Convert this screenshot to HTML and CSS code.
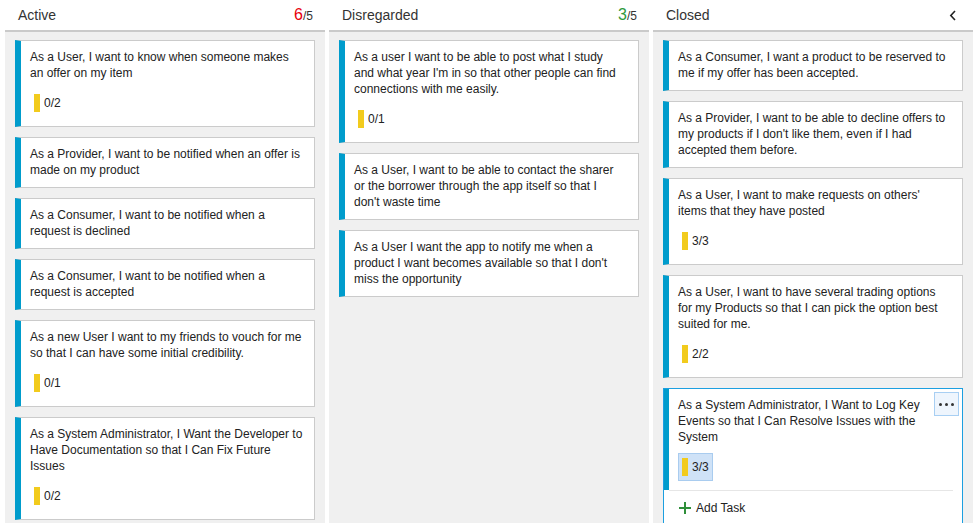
FILE: index.html
```html
<!DOCTYPE html>
<html lang="en">
<head>
<meta charset="utf-8">
<title>Board</title>
<link rel="stylesheet" href="styles.css">
</head>
<body>
<div class="board">
  <section class="column">
    <header class="col-head">
      <span class="col-title">Active</span>
      <span class="count"><span class="num over">6</span>/5</span>
    </header>
    <div class="col-body">
      <div class="card"><div class="card-body">
        <div class="title">As a User, I want to know when someone makes an offer on my item</div>
        <div class="tasks"><span class="progress"><span class="bar"></span>0/2</span></div>
      </div></div>
      <div class="card"><div class="card-body">
        <div class="title">As a Provider, I want to be notified when an offer is made on my product</div>
      </div></div>
      <div class="card"><div class="card-body">
        <div class="title">As a Consumer, I want to be notified when a request is declined</div>
      </div></div>
      <div class="card"><div class="card-body">
        <div class="title">As a Consumer, I want to be notified when a request is accepted</div>
      </div></div>
      <div class="card"><div class="card-body">
        <div class="title">As a new User I want to my friends to vouch for me so that I can have some initial credibility.</div>
        <div class="tasks"><span class="progress"><span class="bar"></span>0/1</span></div>
      </div></div>
      <div class="card"><div class="card-body">
        <div class="title">As a System Administrator, I Want the Developer to Have Documentation so that I Can Fix Future Issues</div>
        <div class="tasks"><span class="progress"><span class="bar"></span>0/2</span></div>
      </div></div>
    </div>
  </section>

  <section class="column">
    <header class="col-head">
      <span class="col-title">Disregarded</span>
      <span class="count"><span class="num ok">3</span>/5</span>
    </header>
    <div class="col-body">
      <div class="card"><div class="card-body">
        <div class="title">As a user I want to be able to post what I study<br>and what year I'm in so that other people can find<br>connections with me easily.</div>
        <div class="tasks"><span class="progress"><span class="bar"></span>0/1</span></div>
      </div></div>
      <div class="card"><div class="card-body">
        <div class="title">As a User, I want to be able to contact the sharer<br>or the borrower through the app itself so that I<br>don't waste time</div>
      </div></div>
      <div class="card"><div class="card-body">
        <div class="title">As a User I want the app to notify me when a product I want becomes available so that I don't miss the opportunity</div>
      </div></div>
    </div>
  </section>

  <section class="column">
    <header class="col-head">
      <span class="col-title">Closed</span>
      <span class="collapse" aria-label="Collapse">
        <svg width="8" height="11" viewBox="0 0 8 11"><path d="M6 1 L1.8 5.5 L6 10" fill="none" stroke="#222" stroke-width="1.6"/></svg>
      </span>
    </header>
    <div class="col-body">
      <div class="card"><div class="card-body">
        <div class="title">As a Consumer, I want a product to be reserved to me if my offer has been accepted.</div>
      </div></div>
      <div class="card"><div class="card-body">
        <div class="title">As a Provider, I want to be able to decline offers to my products if I don't like them, even if I had accepted them before.</div>
      </div></div>
      <div class="card"><div class="card-body">
        <div class="title">As a User, I want to make requests on others'<br>items that they have posted</div>
        <div class="tasks"><span class="progress"><span class="bar"></span>3/3</span></div>
      </div></div>
      <div class="card"><div class="card-body">
        <div class="title">As a User, I want to have several trading options for my Products so that I can pick the option best suited for me.</div>
        <div class="tasks"><span class="progress"><span class="bar"></span>2/2</span></div>
      </div></div>
      <div class="card selected">
        <div class="card-body">
          <div class="title">As a System Administrator, I Want to Log Key Events so that I Can Resolve Issues with the System</div>
          <div class="tasks"><span class="progress active"><span class="bar"></span>3/3</span></div>
        </div>
        <div class="add-task">
          <svg width="12" height="12" viewBox="0 0 12 12"><path d="M6 0 V12 M0 6 H12" stroke="#2f8f3a" stroke-width="2"/></svg>
          <span>Add Task</span>
        </div>
        <button class="more" aria-label="More actions"><i></i><i></i><i></i></button>
      </div>
    </div>
  </section>
</div>
</body>
</html>
```

FILE: styles.css
```css
* {
  box-sizing: border-box;
}

html, body {
  margin: 0;
  height: 100%;
}

body {
  font-family: "Liberation Sans", Arial, Helvetica, sans-serif;
  color: #222;
  background: #fff;
  overflow: hidden;
}

.board {
  display: flex;
  gap: 4px;
  padding-left: 5px;
  height: 523px;
}

.column {
  width: 320px;
  display: flex;
  flex-direction: column;
  flex-shrink: 0;
}

.col-head {
  height: 32px;
  border-bottom: 2px solid #cacaca;
  display: flex;
  align-items: flex-start;
  justify-content: space-between;
  padding: 0 12px 0 13px;
  color: #333;
}

.col-title {
  font-size: 14px;
  line-height: 30px;
}

.count {
  font-size: 12px;
  line-height: 30px;
  color: #333;
}

.num {
  font-size: 16px;
}

.num.over {
  color: #e8000b;
}

.num.ok {
  color: #2e9a3e;
}

.collapse {
  display: flex;
  align-items: center;
  height: 32px;
  padding-bottom: 2px;
  margin-right: 4px;
}

.col-body {
  flex: 1;
  background: #f0f0f0;
  padding: 8px 10px;
  display: flex;
  flex-direction: column;
  gap: 10px;
  overflow: hidden;
}

.card {
  background: #fff;
  border: 1px solid #cbcbcb;
  border-left: 6px solid #009ccc;
  flex-shrink: 0;
}

.card-body {
  padding: 8px 10px 9px 9px;
}

.title {
  font-size: 12px;
  line-height: 16px;
}

.tasks {
  margin-top: 8px;
  display: flex;
}

.progress {
  display: inline-flex;
  align-items: center;
  gap: 4px;
  height: 28px;
  padding: 4px 3px;
  border: 1px solid transparent;
  font-size: 12px;
  line-height: 18px;
}

.progress.active {
  background: #cfe2f7;
  border-color: #a9ccef;
}

.bar {
  width: 6px;
  height: 18px;
  background: #f2cb1d;
}

.card.selected {
  position: relative;
  border: 1px solid #1c9fe0;
}

.card.selected .card-body {
  border-left: 5px solid #009ccc;
}

.add-task {
  margin: 0 9px 0 5px;
  border-top: 1px solid #e6e6e6;
  padding: 9px 0 10px 10px;
  display: flex;
  align-items: center;
  gap: 5px;
  font-size: 12px;
  line-height: 16px;
  color: #222;
}

.more {
  position: absolute;
  top: 3px;
  right: 3px;
  width: 25px;
  height: 24px;
  padding: 0;
  margin: 0;
  background: #eef5fd;
  border: 1px solid #a8cff3;
  display: flex;
  align-items: center;
  justify-content: center;
  gap: 3px;
}

.more i {
  display: block;
  width: 3px;
  height: 3px;
  border-radius: 50%;
  background: #333;
}
```
